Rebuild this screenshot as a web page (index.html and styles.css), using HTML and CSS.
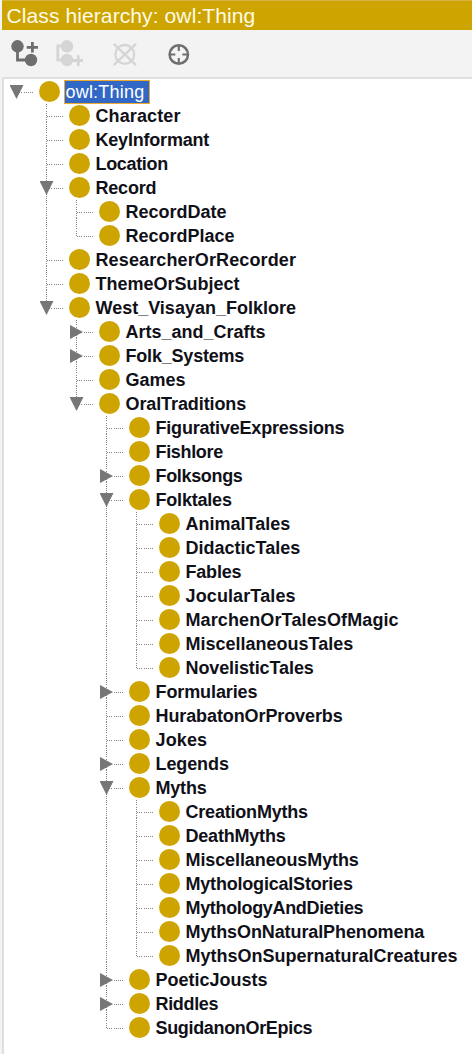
FILE: index.html
```html
<!DOCTYPE html>
<html lang="en">
<head>
<meta charset="utf-8">
<title>Class hierarchy</title>
<link rel="stylesheet" href="styles.css">
</head>
<body>
<header class="title">Class hierarchy: owl:Thing</header>
<div class="toolbar">
  <svg class="tool" width="30" height="30" viewBox="0 0 30 30"><g fill="#6e6e6e"><circle cx="7.5" cy="8.3" r="6.2"/><circle cx="21" cy="22" r="6.2"/></g><path d="M7.5 8v14H21M16.7 9.3H28M22.4 4v10.5" fill="none" stroke="#6e6e6e" stroke-width="2.8"/></svg>
  <svg class="tool" width="30" height="30" viewBox="0 0 30 30"><circle cx="13" cy="8.3" r="6.2" fill="#d5d5d5"/><circle cx="13" cy="22" r="6.2" fill="#d5d5d5"/><path d="M13 8H3.8v14H13M19 22.5H29M24.2 17.3V28" fill="none" stroke="#d5d5d5" stroke-width="2.8"/></svg>
  <svg class="tool tool-delete" width="30" height="30" viewBox="0 0 30 30"><g fill="none" stroke="#d5d5d5" stroke-width="2.3"><circle cx="14.8" cy="16.4" r="9.4"/><path d="M3.8 5.8 26 27.2M26 5.8 3.8 27.2"/></g></svg>
  <svg class="tool tool-target" width="30" height="30" viewBox="0 0 30 30"><g fill="none" stroke="#6e6e6e" stroke-width="2.5"><circle cx="13.8" cy="16.5" r="9.2"/><path stroke-width="2.1" d="M13.8 7v6M13.8 20v6M4.3 16.5h6M17.3 16.5h6"/></g></svg>
</div>
<main class="panel">
<ul class="tree">
  <li class="node open"><div class="row selected"><span class="label">owl:Thing</span></div>
    <ul>
      <li class="node"><div class="row"><span class="label wide">Character</span></div></li>
      <li class="node"><div class="row"><span class="label narrow">KeyInformant</span></div></li>
      <li class="node"><div class="row"><span class="label tight">Location</span></div></li>
      <li class="node open"><div class="row"><span class="label narrow">Record</span></div>
        <ul>
          <li class="node"><div class="row"><span class="label">RecordDate</span></div></li>
          <li class="node"><div class="row"><span class="label">RecordPlace</span></div></li>
        </ul>
      </li>
      <li class="node"><div class="row"><span class="label wide">ResearcherOrRecorder</span></div></li>
      <li class="node"><div class="row"><span class="label">ThemeOrSubject</span></div></li>
      <li class="node open"><div class="row"><span class="label">West_Visayan_Folklore</span></div>
        <ul>
          <li class="node closed"><div class="row"><span class="label">Arts_and_Crafts</span></div></li>
          <li class="node closed"><div class="row"><span class="label narrow">Folk_Systems</span></div></li>
          <li class="node"><div class="row"><span class="label">Games</span></div></li>
          <li class="node open"><div class="row"><span class="label snug">OralTraditions</span></div>
            <ul>
              <li class="node"><div class="row"><span class="label narrow">FigurativeExpressions</span></div></li>
              <li class="node"><div class="row"><span class="label tight">Fishlore</span></div></li>
              <li class="node closed"><div class="row"><span class="label tight">Folksongs</span></div></li>
              <li class="node open"><div class="row"><span class="label narrow">Folktales</span></div>
                <ul>
                  <li class="node"><div class="row"><span class="label">AnimalTales</span></div></li>
                  <li class="node"><div class="row"><span class="label">DidacticTales</span></div></li>
                  <li class="node"><div class="row"><span class="label narrow">Fables</span></div></li>
                  <li class="node"><div class="row"><span class="label wide">JocularTales</span></div></li>
                  <li class="node"><div class="row"><span class="label wide">MarchenOrTalesOfMagic</span></div></li>
                  <li class="node"><div class="row"><span class="label">MiscellaneousTales</span></div></li>
                  <li class="node"><div class="row"><span class="label snug">NovelisticTales</span></div></li>
                </ul>
              </li>
              <li class="node closed"><div class="row"><span class="label snug">Formularies</span></div></li>
              <li class="node"><div class="row"><span class="label snug">HurabatonOrProverbs</span></div></li>
              <li class="node"><div class="row"><span class="label wide">Jokes</span></div></li>
              <li class="node closed"><div class="row"><span class="label snug">Legends</span></div></li>
              <li class="node open"><div class="row"><span class="label narrow">Myths</span></div>
                <ul>
                  <li class="node"><div class="row"><span class="label narrow">CreationMyths</span></div></li>
                  <li class="node"><div class="row"><span class="label narrow">DeathMyths</span></div></li>
                  <li class="node"><div class="row"><span class="label snug">MiscellaneousMyths</span></div></li>
                  <li class="node"><div class="row"><span class="label narrow">MythologicalStories</span></div></li>
                  <li class="node"><div class="row"><span class="label tight">MythologyAndDieties</span></div></li>
                  <li class="node"><div class="row"><span class="label snug">MythsOnNaturalPhenomena</span></div></li>
                  <li class="node"><div class="row"><span class="label">MythsOnSupernaturalCreatures</span></div></li>
                </ul>
              </li>
              <li class="node closed"><div class="row"><span class="label">PoeticJousts</span></div></li>
              <li class="node closed"><div class="row"><span class="label tight">Riddles</span></div></li>
              <li class="node"><div class="row"><span class="label tight">SugidanonOrEpics</span></div></li>
            </ul>
          </li>
        </ul>
      </li>
    </ul>
  </li>
</ul>
</main>
</body>
</html>
```

FILE: styles.css
```css
* { box-sizing: border-box; }

body {
  margin: 0;
  height: 1054px;
  padding-left: 2px;
  overflow: hidden;
  display: flex;
  flex-direction: column;
  background: #f3f3f3;
  font-family: "Liberation Sans", Arial, sans-serif;
}

.title {
  height: 30px;
  padding-left: 4.5px;
  border-top: 1px solid #d4b142;
  background: #cea500;
  color: #fffbe8;
  font-size: 21px;
  line-height: 29px;
  letter-spacing: 0.1px;
  white-space: nowrap;
}

.toolbar {
  display: flex;
  height: 47px;
  padding: 8px 0 0 8px;
}

.tool { margin-right: 14px; }
.tool-delete { margin-left: 12px; margin-right: 25px; }

.panel {
  flex: 1;
  padding: 1px 0 0 14px;
  border-top: 2px solid #dfdfdf;
  border-left: 2px solid #dfdfdf;
  background: #fff;
}

.tree, .tree ul { margin: 0; padding: 0; list-style: none; }
.tree { margin-left: -9px; }
.tree ul { margin-left: 30px; }

.node { position: relative; }

.row {
  position: relative;
  display: flex;
  align-items: center;
  height: 24px;
  padding-left: 29.5px;
}

/* dotted connector between the guide and the marker */
.row::before {
  content: "";
  position: absolute;
  left: 8px;
  top: 12px;
  width: 17px;
  height: 1px;
  background: repeating-linear-gradient(90deg, #858585 0 1.1px, #fff 1.1px 2.1818px);
}

/* class marker */
.row::after {
  content: "";
  order: -1;
  flex: none;
  width: 21px;
  height: 21px;
  margin-top: -1px;
  border-radius: 50%;
  background: #cea500;
}

/* vertical guide alongside sibling nodes */
.tree ul > .node::before {
  content: "";
  position: absolute;
  left: 7px;
  top: 0;
  bottom: 0;
  width: 1px;
  background: repeating-linear-gradient(#858585 0 1.1px, #fff 1.1px 2.1818px);
}
.tree ul > .node:last-child::before { bottom: auto; height: 13px; }

/* expand and collapse arrows */
.open::after, .closed::after {
  content: "";
  position: absolute;
  background: #777;
}
.open::after {
  left: 0.5px;
  top: 5px;
  width: 14px;
  height: 14px;
  clip-path: polygon(0 0, 100% 0, 50% 100%);
}
.closed::after {
  left: 1px;
  top: 5px;
  width: 13px;
  height: 14px;
  clip-path: polygon(0 0, 100% 50%, 0 100%);
}

.label {
  padding-left: 6px;
  color: #101018;
  font-size: 18px;
  font-weight: bold;
  line-height: 24px;
  white-space: nowrap;
}
.wide { letter-spacing: 0.12px; }
.snug { letter-spacing: -0.1px; }
.narrow { letter-spacing: -0.2px; }
.tight { letter-spacing: -0.33px; }

.selected .label {
  width: 86px;
  height: 24px;
  margin-left: 4px;
  padding-left: 1px;
  border: 1px solid #f0a92f;
  background: #3268c5;
  color: #fff;
  font-weight: normal;
  line-height: 23px;
  letter-spacing: 0.2px;
}
```
